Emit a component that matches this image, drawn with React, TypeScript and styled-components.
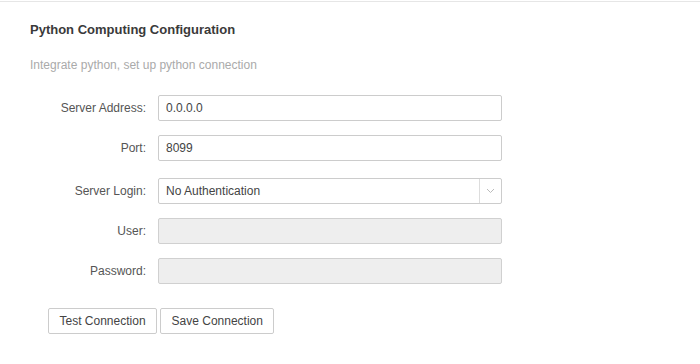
import React from 'react'
import styled, { createGlobalStyle } from 'styled-components'

// ================================================================================================

const GlobalStyle = createGlobalStyle`
  html, body {
    margin: 0;
    padding: 0;
    background: #fff;
    font-family: "Liberation Sans", Arial, sans-serif;
  }
`

// ================================================================================================

const Panel = styled.div`
  margin-top: 1px;
  border-top: 1px solid #e6e6e6;
  padding: 20px 0 0 30px;
`

const Title = styled.h2`
  margin: 0;
  font-size: 13px;
  line-height: 16px;
  font-weight: bold;
  color: #3a3a3a;
`

const Subtitle = styled.p`
  margin: 19px 0 0;
  font-size: 12px;
  line-height: 16px;
  color: #aaa;
`

const Form = styled.div`
  margin-top: 22px;
  display: grid;
  grid-template-columns: 116px 344px;
  column-gap: 12px;
  row-gap: 14px;
  align-items: center;
`

const Label = styled.label<{ $shift?: number }>`
  text-align: right;
  font-size: 12px;
  color: #555;
  margin-top: ${p => p.$shift || 0}px;
`

const Field = styled.input<{ $shift?: number }>`
  box-sizing: border-box;
  width: 344px;
  height: 26px;
  margin: ${p => p.$shift || 0}px 0 0;
  padding: 0 7px;
  border: 1px solid #ccc;
  border-radius: 2px;
  font-family: inherit;
  font-size: 12px;
  color: #444;
  background: #fff;
  outline: none;

  &:disabled {
    background: #eee;
    border-color: #d0d0d0;
  }
`

const Select = styled.div<{ $shift?: number }>`
  box-sizing: border-box;
  width: 344px;
  height: 26px;
  margin-top: ${p => p.$shift || 0}px;
  display: flex;
  align-items: center;
  border: 1px solid #ccc;
  border-radius: 2px;
  font-size: 12px;
  color: #444;
`

const SelectValue = styled.span`
  flex: 1;
  padding: 0 7px;
`

const SelectArrow = styled.span`
  width: 21px;
  height: 100%;
  display: flex;
  align-items: center;
  justify-content: center;
  border-left: 1px solid #ddd;
`

const Buttons = styled.div`
  margin: 24px 0 0 18px;
  display: flex;
  gap: 3px;
`

const Button = styled.button`
  height: 26px;
  padding: 0 10.5px;
  border: 1px solid #ccc;
  border-radius: 2px;
  background: #fff;
  font-family: inherit;
  font-size: 12px;
  color: #444;
`

// ================================================================================================

const App = () => (
  <>
    <GlobalStyle />
    <Panel>
      <Title>Python Computing Configuration</Title>
      <Subtitle>Integrate python, set up python connection</Subtitle>

      <Form>
        <Label>Server Address:</Label>
        <Field defaultValue="0.0.0.0" />

        <Label>Port:</Label>
        <Field defaultValue="8099" />

        <Label $shift={3}>Server Login:</Label>
        <Select $shift={3}>
          <SelectValue>No Authentication</SelectValue>
          <SelectArrow>
            <svg width="9" height="6" viewBox="0 0 9 6">
              <path d="M1 1l3.5 3.5L8 1" fill="none" stroke="#bbb" strokeWidth="1" />
            </svg>
          </SelectArrow>
        </Select>

        <Label>User:</Label>
        <Field disabled />

        <Label>Password:</Label>
        <Field type="password" disabled />
      </Form>

      <Buttons>
        <Button>Test Connection</Button>
        <Button>Save Connection</Button>
      </Buttons>
    </Panel>
  </>
)

// ================================================================================================

export default App
